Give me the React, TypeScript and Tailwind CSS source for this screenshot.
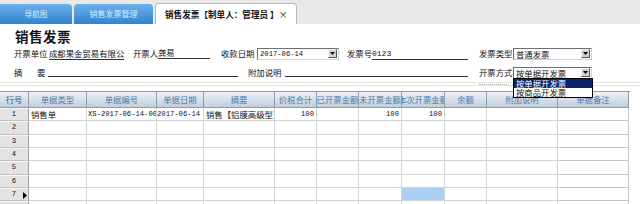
import React from 'react'

const cjk = "font-['Noto_Sans_CJK_SC',sans-serif]"
const mono = "font-['Liberation_Mono','Noto_Sans_CJK_SC',monospace] text-[7.2px]"

function Arrow() {
    return (
        <span className="w-[9px] h-[9px] mr-[1px] shrink-0 bg-[#d6d3ce] border-t border-l border-[#f4f4f4] border-r border-b border-r-[#555] border-b-[#555] flex items-center justify-center">
            <svg width="5" height="3" viewBox="0 0 5 3"><path d="M0 0h5L2.5 3z" fill="#000" /></svg>
        </span>
    )
}

function Select({ value, width, isMono, children }: { value: string, width: string, isMono?: boolean, children?: React.ReactNode }) {
    return (
        <div className={`relative flex items-center h-[12px] ${width} shrink-0 bg-white border-t border-l border-[#6e6e6e] border-r border-b border-r-[#d0d0d0] border-b-[#d0d0d0]`}>
            <span className={`flex-1 pl-[2px] leading-[10px] whitespace-nowrap ${isMono ? mono : 'text-[8.4px]'}`}>{value}</span>
            <Arrow />
            {children}
        </div>
    )
}

const columns = ['行号', '单据类型', '单据编号', '单据日期', '摘要', '价税合计', '已开票金额', '未开票金额', '本次开票金额', '余额', '附加说明', '单据备注']
const cols = 'grid grid-cols-[29px_58px_70px_47px_71px_42px_42px_43px_43px_42px_71px_71px]'

export default function App() {
    const rows = [1, 2, 3, 4, 5, 6, 7, 8]

    return (
        <div className={`w-[640px] h-[204px] overflow-hidden bg-white text-[#111] ${cjk}`}>
            {/* tabs */}
            <div className="h-[24px] bg-[#e8e8e8] flex items-end">
                <div className="w-[72px] h-[20px] rounded-tr-[4px] bg-gradient-to-b from-[#6cb2ec] to-[#2f83cc] text-[#d6ecff] text-[7.5px] flex items-center justify-center leading-none">导航图</div>
                <div className="w-[79px] h-[20px] ml-[2px] rounded-t-[4px] bg-gradient-to-b from-[#6cb2ec] to-[#2f83cc] text-[#d6ecff] text-[8px] flex items-center justify-center leading-none">销售发票管理</div>
                <div className="w-[142px] h-[21px] ml-[2px] rounded-t-[4px] bg-white border border-b-0 border-[#b8b8b8] text-[8.6px] font-bold flex items-center pl-[9px] leading-none whitespace-nowrap">
                    销售发票【制单人：管理员 】<span className="font-normal text-[9px]">×</span>
                </div>
            </div>

            {/* title */}
            <div className="h-[23px] pl-[15px] pt-[6px] text-[13.5px] font-bold leading-none tracking-[0.5px]">销售发票</div>

            {/* row 1 */}
            <div className="flex items-center h-[13px] pl-[14px] text-[8.4px] leading-none whitespace-nowrap">
                <span className="w-[35px] shrink-0">开票单位</span>
                <span className="w-[75px] shrink-0"><span className="border-b border-[#333]">成都果金贸易有限公</span></span>
                <span className="w-[9px] shrink-0" />
                <span className="w-[25px] shrink-0">开票人</span>
                <span className="w-[52px] shrink-0 border-b border-[#333] pb-[1px]">龚易</span>
                <span className="w-[11px] shrink-0" />
                <span className="w-[36px] shrink-0">收款日期</span>
                <Select value="2017-06-14" width="w-[82px]" isMono />
                <span className="w-[8px] shrink-0" />
                <span className="w-[25px] shrink-0">发票号</span>
                <span className="w-[96px] shrink-0 border-b border-[#333] pb-[1px] pt-[2px] font-['Liberation_Mono',monospace] text-[8px] leading-[8px]">0123</span>
                <span className="w-[11px] shrink-0" />
                <span className="w-[34px] shrink-0">发票类型</span>
                <Select value="普通发票" width="w-[79px]" />
            </div>

            {/* row 2 */}
            <div className="flex items-center h-[13px] mt-[6px] pl-[14px] text-[8.4px] leading-none whitespace-nowrap relative z-10">
                <span className="w-[23px] shrink-0">摘</span>
                <span className="w-[11px] shrink-0">要</span>
                <span className="w-[190px] h-[9px] shrink-0 border-b border-[#333]" />
                <span className="w-[10px] shrink-0" />
                <span className="w-[37px] shrink-0">附加说明</span>
                <span className="w-[183px] h-[9px] shrink-0 border-b border-[#333]" />
                <span className="w-[11px] shrink-0" />
                <span className="w-[34px] shrink-0">开票方式</span>
                <Select value="按单据开发票" width="w-[79px]">
                    <div className="absolute left-[-1px] top-full w-[80px] border border-[#000] bg-white text-[8.4px] leading-[9px]">
                        <div className="h-[9px] bg-[#0a246a] text-white pl-[2px]">按单据开发票</div>
                        <div className="h-[9px] pl-[2px]">按商品开发票</div>
                    </div>
                </Select>
            </div>

            {/* splitter */}
            <div className="mt-[3px] h-[4px] border-t border-[#a4a4a4] border-b border-[#e2e2e2] flex">
                <div className="ml-[479px] mt-[1px] w-[30px] h-[1px] border-t border-dotted border-[#b8b8b8]" />
            </div>

            {/* grid */}
            <div className="mt-[5px] w-[630px] border-t border-[#9a9a9a] text-[8.4px] leading-none">
                <div className={`${cols} h-[16px]`}>
                    {columns.map((c, i) => (
                        <div key={c} className={`flex items-center justify-center overflow-hidden whitespace-nowrap border-r border-b border-[#8e9cae] bg-gradient-to-b from-[#eef2f7] to-[#c2cddb] ${i === 0 ? 'text-[#2e5c80]' : 'text-[#4f7ca8]'}`}>{c}</div>
                    ))}
                </div>
                {rows.map(r => (
                    <div key={r} className={`${cols} h-[13.33px]`}>
                        <div className="relative flex items-center justify-center bg-[#e3e3e3] border-r border-[#a0a0a0] border-b border-b-[#c4c4c4] border-t border-t-[#f6f6f6]">
                            <span className={mono}>{r}</span>
                            {r === 7 && (
                                <svg className="absolute right-[1px] top-[3px]" width="4" height="7" viewBox="0 0 4 7"><path d="M0 0l4 3.5L0 7z" fill="#000" /></svg>
                            )}
                        </div>
                        <div className="flex items-center pl-[2px] border-r border-b border-[#d4d4d4] overflow-hidden whitespace-nowrap">{r === 1 ? '销售单' : ''}</div>
                        <div className={`flex items-center pl-[1px] border-r border-b border-[#d4d4d4] overflow-hidden whitespace-nowrap ${mono}`}>{r === 1 ? 'XS-2017-06-14-0001' : ''}</div>
                        <div className={`flex items-center border-r border-b border-[#d4d4d4] overflow-hidden whitespace-nowrap ${mono}`}>{r === 1 ? '2017-06-14' : ''}</div>
                        <div className="flex items-center pl-[2px] border-r border-b border-[#d4d4d4] overflow-hidden whitespace-nowrap">{r === 1 ? '销售【铝膜高级型】' : ''}</div>
                        <div className={`flex items-center justify-end pr-[2px] border-r border-b border-[#d4d4d4] ${mono}`}>{r === 1 ? '100' : ''}</div>
                        <div className="border-r border-b border-[#d4d4d4]" />
                        <div className={`flex items-center justify-end pr-[2px] border-r border-b border-[#d4d4d4] ${mono}`}>{r === 1 ? '100' : ''}</div>
                        <div className={`flex items-center justify-end pr-[2px] border-r border-b border-[#d4d4d4] ${mono} ${r === 7 ? 'bg-[#a9cff5]' : ''}`}>{r === 1 ? '100' : ''}</div>
                        <div className="border-r border-b border-[#d4d4d4]" />
                        <div className="border-r border-b border-[#d4d4d4]" />
                        <div className="border-r border-b border-[#c4c4c4]" />
                    </div>
                ))}
            </div>
        </div>
    )
}
